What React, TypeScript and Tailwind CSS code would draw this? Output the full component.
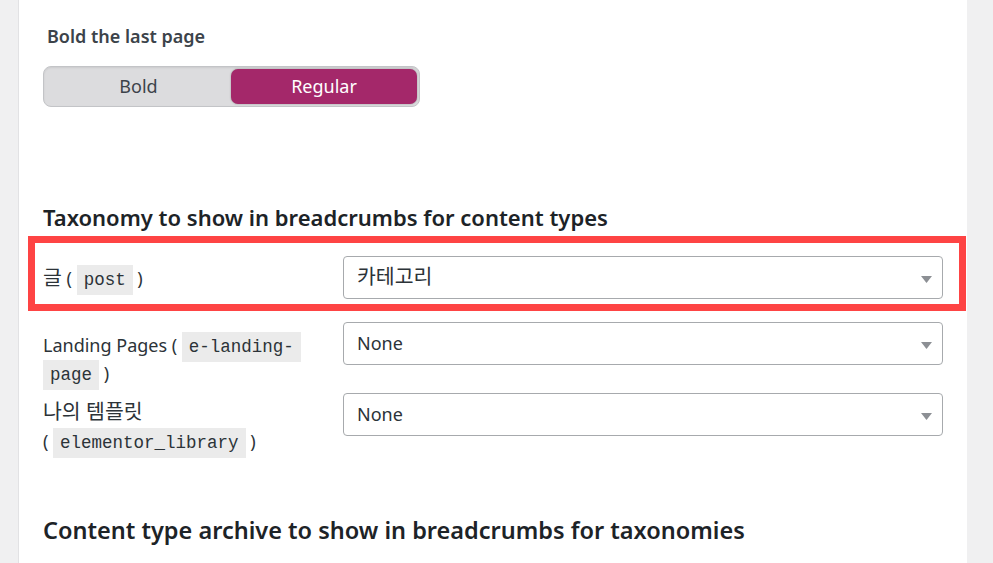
import React from "react";

type Row = {
    label: React.ReactNode;
    value: React.ReactNode;
    rowClass: string;
    labelClass: string;
};

function Code({ children }: { children: React.ReactNode }) {
    return (
        <code className="bg-[#ebebeb] px-[7px] py-[5px] text-[17.5px] leading-none text-[#2c3338] [font-family:'Liberation_Mono','DejaVu_Sans_Mono',monospace] [box-decoration-break:clone]">
            {children}
        </code>
    );
}

function Ko({ children }: { children: React.ReactNode }) {
    return <span className="text-[20.5px] leading-none">{children}</span>;
}

function Select({ value }: { value: React.ReactNode }) {
    return (
        <div className="flex h-[43px] w-[600px] shrink-0 items-center justify-between rounded-[4px] border border-[#a7aaad] bg-white pl-[13px] pr-[10px]">
            <span className="text-[18px] text-[#2c3338]">{value}</span>
            <svg width="11" height="7" viewBox="0 0 11 7" className="mt-[4px]">
                <path d="M0 0h11L5.5 7z" fill="#8c8f94" />
            </svg>
        </div>
    );
}

const rows: Row[] = [
    {
        label: (
            <>
                <Ko>글</Ko> (&nbsp;<Code>post</Code> )
            </>
        ),
        value: <Ko>카테고리</Ko>,
        rowClass: "flex items-center",
        labelClass: "leading-[28px]",
    },
    {
        label: (
            <>
                Landing Pages (&nbsp;<Code>e-landing-page</Code> )
            </>
        ),
        value: "None",
        rowClass: "mt-[23px] flex items-start",
        labelClass: "pt-[9px] leading-[28px]",
    },
    {
        label: (
            <>
                <Ko>나의 템플릿</Ko> (&nbsp;<Code>elementor_library</Code> )
            </>
        ),
        value: "None",
        rowClass: "mt-[6px] flex items-start",
        labelClass: "pt-[5px] leading-[29px]",
    },
];

export default function App() {
    return (
        <div className="flex h-[563px] w-full overflow-hidden bg-[#f0f0f1] pl-[18px] pr-[26px] [font-family:'Noto_Sans','Noto_Sans_CJK_KR',sans-serif]">
            <div className="flex-1 border-l border-[#e2e2e4] bg-white pl-[24px] pt-[22px]">
                <h4 className="pl-[4px] text-[18px] font-semibold leading-[28px] text-[#3c434a]">
                    Bold the last page
                </h4>

                <div className="mt-[16px] flex h-[41px] w-[377px] items-center rounded-[8px] border border-[#c3c4c7] bg-[#dcdcde] p-[2px] shadow-[inset_0_1px_2px_rgba(0,0,0,0.08)]">
                    <div className="flex h-full flex-1 items-center justify-center text-[18px] text-[#3c434a]">
                        Bold
                    </div>
                    <div className="flex h-full w-[186px] items-center justify-center rounded-[7px] bg-[#a4286a] text-[18px] text-white shadow-[0_0_2px_rgba(0,0,0,0.35)]">
                        Regular
                    </div>
                </div>

                <h2 className="mt-[95px] text-[22px] font-semibold leading-[30px] text-[#1d2327]">
                    Taxonomy to show in breadcrumbs for content types
                </h2>

                <div className="relative mt-[24px] flex flex-col">
                    {rows.map((row, i) => (
                        <div key={i} className={row.rowClass}>
                            <div
                                className={
                                    "w-[300px] shrink-0 pr-[44px] text-[18px] text-[#2c3338] " +
                                    row.labelClass
                                }
                            >
                                {row.label}
                            </div>
                            <Select value={row.value} />
                        </div>
                    ))}
                    <div className="pointer-events-none absolute left-[-15px] top-[-20px] h-[75px] w-[938px] border-[7px] border-[#fe4444]" />
                </div>

                <h2 className="mt-[59px] text-[23.5px] font-semibold leading-[30px] text-[#1d2327]">
                    Content type archive to show in breadcrumbs for taxonomies
                </h2>
            </div>
        </div>
    );
}
